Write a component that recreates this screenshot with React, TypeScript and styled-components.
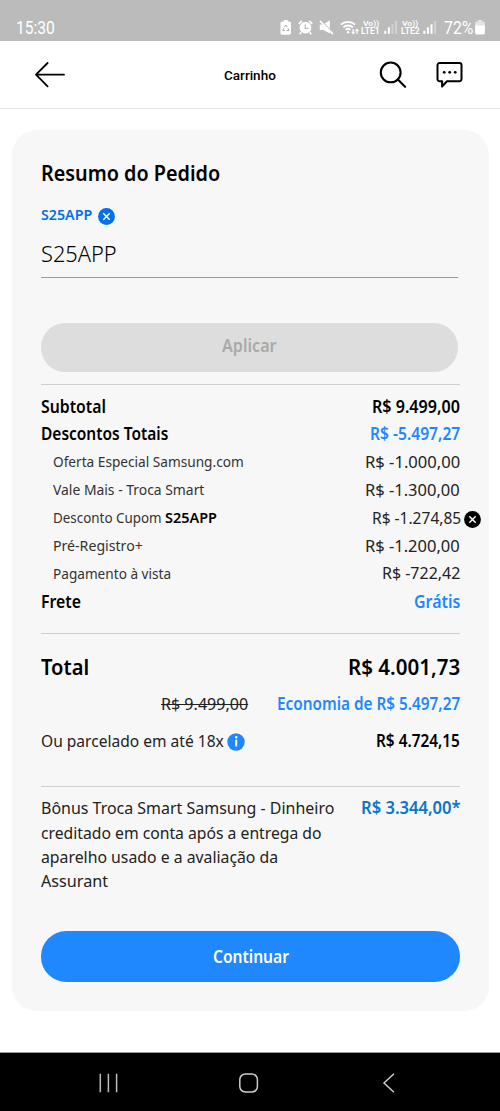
import React, { useLayoutEffect, useRef, useState } from "react";
import styled, { createGlobalStyle } from "styled-components";

const GlobalStyle = createGlobalStyle`
  *, *::before, *::after { box-sizing: border-box; }
  body { margin: 0; background: #fff; color: #000; font-family: "Noto Sans", sans-serif; }
  button { font: inherit; border: 0; padding: 0; }
  svg { display: block; flex: none; }
`;

/* ---------- Text set to a given measure ---------- */

type Face = "sans" | "system";

const Measure = styled.span<{ $width: number }>`
  display: inline-block;
  flex: none;
  width: ${(p) => p.$width}px;
  white-space: nowrap;
`;

const Glyphs = styled.span<{ $size: number; $weight: number; $color: string; $struck?: boolean; $face: Face }>`
  display: inline-block;
  transform-origin: 0 50%;
  font-family: ${(p) => (p.$face === "system" ? "Roboto" : '"Noto Sans"')}, sans-serif;
  font-size: ${(p) => p.$size}px;
  font-weight: ${(p) => p.$weight};
  color: ${(p) => p.$color};
  text-decoration: ${(p) => (p.$struck ? "line-through" : "none")};
  text-decoration-thickness: 1.3px;
`;

interface TextProps {
  width: number;
  size?: number;
  weight?: number;
  color?: string;
  struck?: boolean;
  face?: Face;
  children: string;
}

function Text({ width, size = 17, weight = 400, color = "#000", struck, face = "sans", children }: TextProps) {
  const ref = useRef<HTMLSpanElement>(null);
  const [scale, setScale] = useState(1);
  useLayoutEffect(() => {
    if (ref.current) setScale(width / ref.current.offsetWidth);
  }, [width, children]);
  return (
    <Measure $width={width}>
      <Glyphs
        ref={ref}
        $size={size}
        $weight={weight}
        $color={color}
        $struck={struck}
        $face={face}
        style={{ transform: `scaleX(${scale})` }}
      >
        {children}
      </Glyphs>
    </Measure>
  );
}

/* ---------- Layout ---------- */

const Screen = styled.div`
  display: flex;
  flex-direction: column;
  width: 500px;
  height: 1111px;
  overflow: hidden;
`;

const StatusBar = styled.div`
  display: flex;
  justify-content: space-between;
  height: 41px;
  padding: 15px 15px 0 16px;
  background: #bbb;
  line-height: 26px;
`;

const StatusIcons = styled.div`
  display: flex;
  align-items: flex-start;
  height: 26px;
`;

const Slot = styled.div<{ $gap: number; $top?: number }>`
  margin-left: ${(p) => p.$gap}px;
  padding-top: ${(p) => p.$top ?? 5}px;
`;

const Carrier = styled.div`
  display: flex;
  flex-direction: column;
  align-items: center;
  line-height: 8px;
  font-size: 8px;

  & > span { height: 8px; }
`;

const Header = styled.header`
  display: grid;
  grid-template-columns: 1fr auto 1fr;
  align-items: center;
  height: 68px;
  padding: 0 36px 0 34px;
  border-bottom: 1px solid #e4e4e4;
`;

const HeaderTitle = styled.div`
  padding: 0 0 2px 1px;
`;

const HeaderActions = styled.div`
  display: flex;
  justify-content: flex-end;
  gap: 28px;
`;

const Main = styled.main`
  flex: 1;
  padding: 21px 11px 0 12px;
`;

const Card = styled.section`
  display: flex;
  flex-direction: column;
  height: 880.5px;
  padding: 28px 29px 28.8px;
  border-radius: 25px;
  background: #f7f7f7;
`;

const CardTitle = styled.h1`
  margin: 0;
  height: 30px;
  font-size: 16px;
  line-height: 29px;
`;

const CouponTag = styled.div`
  display: flex;
  align-items: center;
  gap: 6px;
  height: 21px;
  margin-top: 17px;
  line-height: 18px;

  & > span { margin-bottom: 3px; }
  & > svg { margin-top: 1px; }
`;

const CouponField = styled.div`
  width: 417px;
  height: 42px;
  margin-top: 10px;
  border-bottom: 1px solid #999;
  line-height: 36px;
`;

const ApplyButton = styled.button`
  width: 417px;
  height: 48.5px;
  margin-top: 45px;
  padding-bottom: 3px;
  border-radius: 24.25px;
  background: #ddd;
  line-height: 45.5px;
`;

const Divider = styled.hr<{ $gap: number }>`
  width: 100%;
  height: 1px;
  margin: ${(p) => p.$gap}px 0 0;
  border: 0;
  background: #cfcfcf;
`;

const Lines = styled.div`
  margin-top: 7.6px;
`;

const Row = styled.div<{ $height?: number; $indent?: boolean; $bleed?: number }>`
  display: flex;
  justify-content: space-between;
  height: ${(p) => p.$height ?? 27.9}px;
  padding-left: ${(p) => (p.$indent ? 12 : 0)}px;
  margin-right: ${(p) => -(p.$bleed ?? 0)}px;
  line-height: ${(p) => p.$height ?? 27.9}px;
`;

const Group = styled.div<{ $gap?: number }>`
  display: flex;
  align-items: center;
  gap: ${(p) => p.$gap ?? 3}px;

  & > svg { margin-top: 2px; }
`;

const Totals = styled.div`
  margin-top: 12.5px;
`;

const SavingsRow = styled(Row)`
  justify-content: flex-end;
  gap: 29px;
`;

const Bonus = styled.div`
  display: flex;
  justify-content: space-between;
  margin-top: 9.5px;
  line-height: 24.2px;
`;

const BonusCopy = styled.div`
  display: flex;
  flex-direction: column;
`;

const ContinueButton = styled.button`
  width: 100%;
  height: 50.4px;
  margin-top: 38px;
  padding-top: 1px;
  border-radius: 25.2px;
  background: #1f88ff;
  line-height: 49.4px;
`;

const NavBar = styled.nav`
  display: flex;
  align-items: center;
  gap: 120px;
  height: 59px;
  padding: 2px 0 0 98px;
  border-top: 1px solid #999;
  background: #000;
`;

/* ---------- Icons ---------- */

function RoundClose({ color, size }: { color: string; size: number }) {
  return (
    <svg width={size} height={size} viewBox="0 0 17 17">
      <circle cx="8.5" cy="8.5" r="8.4" fill={color} />
      <path d="M5.3 5.3l6.4 6.4M11.7 5.3l-6.4 6.4" stroke="#fff" strokeWidth="1.5" />
    </svg>
  );
}

function InfoIcon() {
  return (
    <svg width="18" height="18" viewBox="0 0 18 18">
      <circle cx="9" cy="9" r="8.7" fill="#1f88ff" />
      <path d="M9.2 6.6v6.8" stroke="#fff" strokeWidth="2" />
      <circle cx="9.2" cy="4.3" r="1.2" fill="#fff" />
    </svg>
  );
}

function BackArrow() {
  return (
    <svg width="32" height="28" viewBox="0 0 32 28" fill="none" stroke="#000" strokeWidth="1.8" strokeLinecap="round" strokeLinejoin="round">
      <path d="M30 13.7H2M13.6 2L2 13.7l11.6 11.6" />
    </svg>
  );
}

function SearchIcon() {
  return (
    <svg width="29" height="28" viewBox="0 0 29 28" fill="none" stroke="#000" strokeWidth="2.1" strokeLinecap="round">
      <circle cx="11.7" cy="11.4" r="9.9" />
      <path d="M18.9 18.6l7.2 7.2" />
    </svg>
  );
}

function ChatIcon() {
  return (
    <svg width="28" height="28" viewBox="0 0 28 28">
      <path
        d="M3.6 2H23.4a2.1 2.1 0 0 1 2.1 2.1v14a2.1 2.1 0 0 1-2.1 2.1H11L6.1 25.5V20.2H3.6a2.1 2.1 0 0 1-2.1-2.1v-14A2.1 2.1 0 0 1 3.6 2z"
        fill="none"
        stroke="#000"
        strokeWidth="2"
        strokeLinejoin="round"
      />
      <circle cx="8.2" cy="11.3" r="1.4" />
      <circle cx="13.7" cy="11.3" r="1.4" />
      <circle cx="19.2" cy="11.3" r="1.4" />
    </svg>
  );
}

function RecycleBattery() {
  return (
    <svg width="12" height="15" viewBox="0 0 12 15">
      <path d="M3.8 0h4.1v1.4h1.4a1.7 1.7 0 0 1 1.7 1.7v10a1.7 1.7 0 0 1-1.7 1.7H2.2A1.7 1.7 0 0 1 .5 13.1v-10A1.7 1.7 0 0 1 2.2 1.4h1.6z" fill="#fff" />
      <path d="M4.3 7.2l1.5-2.2 1.5 2.2M8 8.3l1 2.3H6.5M5 10.6H2.7l1-2.3" fill="none" stroke="#aaa" strokeWidth="1" />
    </svg>
  );
}

function AlarmIcon() {
  return (
    <svg width="15" height="15" viewBox="0 0 15 15">
      <path d="M.8 3.8L3.8.9M14.2 3.8L11.2.9M3.2 12.2l-1.4 2M11.8 12.2l1.4 2" stroke="#fff" strokeWidth="1.7" />
      <circle cx="7.5" cy="7.7" r="5.9" fill="#fff" />
      <path d="M7.3 4.3v4h3.2" fill="none" stroke="#bbb" strokeWidth="1.2" />
    </svg>
  );
}

function MuteIcon() {
  return (
    <svg width="15" height="15" viewBox="0 0 15 15">
      <path d="M.8 4.6h3.6L10.8.2v13.2L4.4 10H.8z" fill="#fff" />
      <path d="M2.3.8L14.6 13.4" stroke="#bbb" strokeWidth="1.2" />
      <path d="M1 1L14 14.2" stroke="#fff" strokeWidth="1.7" />
    </svg>
  );
}

function WifiIcon() {
  return (
    <svg width="20" height="15" viewBox="0 0 20 15" fill="none" stroke="#fff" strokeWidth="1.8">
      <path d="M.8 4.7a10.5 10.5 0 0 1 14.4 0" />
      <path d="M3.3 7.4a7 7 0 0 1 9.6 0" />
      <path d="M5.7 9.9a3.5 3.5 0 0 1 4.8 0" />
      <circle cx="8.1" cy="12.3" r="1.2" fill="#fff" stroke="none" />
      <path d="M13.2 9v4.3M11.7 11.9l1.5 1.6 1.5-1.6M17 14V9.5M15.5 11L17 9.4l1.5 1.6" strokeWidth="1.2" />
    </svg>
  );
}

function SignalIcon({ bars }: { bars: number }) {
  return (
    <svg width="14" height="14" viewBox="0 0 14 14" fill="#fff">
      {[3, 6.5, 9.5, 13].map((h, i) => (
        <rect key={h} x={0.3 + i * 3.6} y={13.8 - h} width="2" height={h} opacity={i < bars ? 1 : 0.35} />
      ))}
    </svg>
  );
}

function BatteryIcon() {
  return (
    <svg width="10" height="15" viewBox="0 0 10 15" fill="#fff">
      <path d="M3 0h4v1.5h1.3A1.6 1.6 0 0 1 9.9 3.1V5.5H.1V3.1a1.6 1.6 0 0 1 1.6-1.6H3z" opacity=".6" />
      <path d="M.1 5.3h9.8v7.6a1.6 1.6 0 0 1-1.6 1.6H1.7a1.6 1.6 0 0 1-1.6-1.6z" />
    </svg>
  );
}

/* ---------- Page ---------- */

const BLUE = "#1f88ff";

interface Discount {
  label: string;
  labelWidth: number;
  code?: string;
  value: string;
  valueWidth: number;
  removable?: boolean;
}

const discounts: Discount[] = [
  { label: "Oferta Especial Samsung.com", labelWidth: 191, value: "R$ -1.000,00", valueWidth: 95.5 },
  { label: "Vale Mais - Troca Smart", labelWidth: 151, value: "R$ -1.300,00", valueWidth: 95 },
  { label: "Desconto Cupom", labelWidth: 109, code: "S25APP", value: "R$ -1.274,85", valueWidth: 89.5, removable: true },
  { label: "Pré-Registro+", labelWidth: 89.5, value: "R$ -1.200,00", valueWidth: 95 },
  { label: "Pagamento à vista", labelWidth: 118, value: "R$ -722,42", valueWidth: 78 },
];

const bonusLines: [string, number][] = [
  ["Bônus Troca Smart Samsung - Dinheiro", 293],
  ["creditado em conta após a entrega do", 281],
  ["aparelho usado e a avaliação da", 237],
  ["Assurant", 67.5],
];

function CarrierLabel({ name }: { name: string }) {
  return (
    <Carrier>
      <Text width={16} size={8} weight={600} color="#fff" face="system">Vo))</Text>
      <Text width={19} size={9} weight={600} color="#fff" face="system">{name}</Text>
    </Carrier>
  );
}

export default function App() {
  return (
    <Screen>
      <GlobalStyle />
      <StatusBar>
        <Text width={39} size={18} color="#fff" face="system">15:30</Text>
        <StatusIcons>
          <Slot $gap={0}><RecycleBattery /></Slot>
          <Slot $gap={5.5}><AlarmIcon /></Slot>
          <Slot $gap={6.5}><MuteIcon /></Slot>
          <Slot $gap={6}><WifiIcon /></Slot>
          <Slot $gap={1} $top={4}><CarrierLabel name="LTE1" /></Slot>
          <Slot $gap={3.5}><SignalIcon bars={2} /></Slot>
          <Slot $gap={3} $top={4}><CarrierLabel name="LTE2" /></Slot>
          <Slot $gap={3.5}><SignalIcon bars={3} /></Slot>
          <Slot $gap={7} $top={0}>
            <Text width={29} size={18} color="#fff" face="system">72%</Text>
          </Slot>
          <Slot $gap={2}><BatteryIcon /></Slot>
        </StatusIcons>
      </StatusBar>

      <Header>
        <BackArrow />
        <HeaderTitle><Text width={52} size={13} weight={500} face="system">Carrinho</Text></HeaderTitle>
        <HeaderActions>
          <SearchIcon />
          <ChatIcon />
        </HeaderActions>
      </Header>

      <Main>
        <Card>
          <CardTitle><Text width={179} size={22} weight={600}>Resumo do Pedido</Text></CardTitle>
          <CouponTag>
            <Text width={51} size={14.5} weight={600} color="#0070f0">S25APP</Text>
            <RoundClose color="#0070f0" size={17} />
          </CouponTag>
          <CouponField><Text width={76} size={21.5} weight={300}>S25APP</Text></CouponField>
          <ApplyButton disabled><Text width={55} weight={600} color="#aaa">Aplicar</Text></ApplyButton>

          <Divider $gap={12.5} />

          <Lines>
            <Row>
              <Text width={65} weight={600}>Subtotal</Text>
              <Text width={88} weight={600}>R$ 9.499,00</Text>
            </Row>
            <Row>
              <Text width={127.5} weight={600}>Descontos Totais</Text>
              <Text width={90} weight={600} color={BLUE}>R$ -5.497,27</Text>
            </Row>
            {discounts.map((d) => (
              <Row key={d.label} $indent $bleed={d.removable ? 21 : 0}>
                <Group>
                  <Text width={d.labelWidth} size={15} color="#333">{d.label}</Text>
                  {d.code && <Text width={52} size={15} weight={600}>{d.code}</Text>}
                </Group>
                <Group>
                  <Text width={d.valueWidth} color="#222">{d.value}</Text>
                  {d.removable && <RoundClose color="#000" size={17} />}
                </Group>
              </Row>
            ))}
            <Row>
              <Text width={40} weight={600}>Frete</Text>
              <Text width={46} weight={600} color={BLUE}>Grátis</Text>
            </Row>
          </Lines>

          <Divider $gap={17.2} />

          <Totals>
            <Row $height={40}>
              <Text width={48.5} size={22} weight={600}>Total</Text>
              <Text width={112} size={22} weight={600}>R$ 4.001,73</Text>
            </Row>
            <SavingsRow $height={36}>
              <Text width={87} color="#222" struck>R$ 9.499,00</Text>
              <Text width={183} weight={600} color={BLUE}>Economia de R$ 5.497,27</Text>
            </SavingsRow>
            <Row $height={38}>
              <Group>
                <Text width={183} color="#222">Ou parcelado em até 18x</Text>
                <InfoIcon />
              </Group>
              <Text width={84} weight={600}>R$ 4.724,15</Text>
            </Row>
          </Totals>

          <Divider $gap={25.5} />

          <Bonus>
            <BonusCopy>
              {bonusLines.map(([line, width]) => (
                <Text key={line} width={width} color="#222">{line}</Text>
              ))}
            </BonusCopy>
            <Text width={99.5} weight={600} color="#0c75c9">R$ 3.344,00*</Text>
          </Bonus>

          <ContinueButton><Text width={76} weight={600} color="#fff">Continuar</Text></ContinueButton>
        </Card>
      </Main>

      <NavBar>
        <svg width="21" height="20" viewBox="0 0 21 20" stroke="#bbb" strokeWidth="1.5">
          <path d="M2.3.7v18.6M10.4.7v18.6M18.6.7v18.6" />
        </svg>
        <svg width="20" height="20" viewBox="0 0 20 20" fill="none" stroke="#ccc" strokeWidth="1.5">
          <rect x="0.8" y="1" width="17.6" height="18" rx="5.5" />
        </svg>
        <svg width="20" height="20" viewBox="-3 0 20 20" fill="none" stroke="#ccc" strokeWidth="1.5">
          <path d="M12 .7L2 10l10 9.3" />
        </svg>
      </NavBar>
    </Screen>
  );
}
